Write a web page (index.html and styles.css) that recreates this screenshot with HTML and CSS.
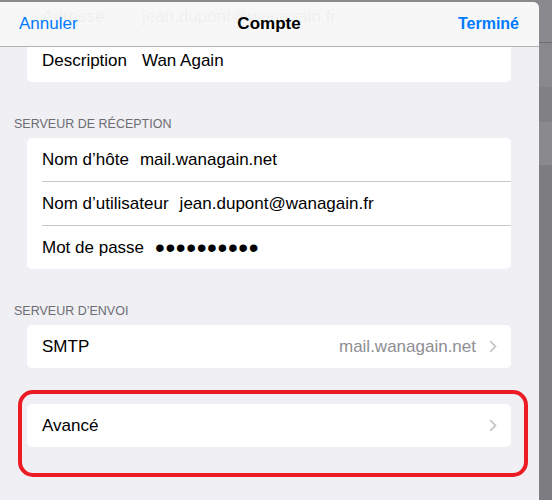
FILE: index.html
```html
<!DOCTYPE html>
<html lang="fr">
<head>
<meta charset="utf-8">
<title>Compte</title>
<link rel="stylesheet" href="styles.css">
</head>
<body>
<div class="screen">
  <div class="sheet">
    <div class="content">
      <div class="card">
        <div class="row"><span class="label fixed">Adresse</span><span class="value">jean.dupont@wanagain.fr</span></div>
        <div class="row"><span class="label fixed">Description</span><span class="value">Wan Again</span></div>
      </div>
      <div class="section-header">Serveur de réception</div>
      <div class="card">
        <div class="row"><span class="label">Nom d’hôte</span><span class="value">mail.wanagain.net</span></div>
        <div class="row"><span class="label">Nom d’utilisateur</span><span class="value">jean.dupont@wanagain.fr</span></div>
        <div class="row"><span class="label">Mot de passe</span><span class="value dots">••••••••••</span></div>
      </div>
      <div class="section-header">Serveur d’envoi</div>
      <div class="card">
        <div class="row"><span class="label">SMTP</span><span class="detail">mail.wanagain.net</span><svg class="chevron" width="8" height="13" viewBox="0 0 8 13"><path d="M1.2 1.2 L6.5 6.5 L1.2 11.8" fill="none" stroke="#c7c7cc" stroke-width="1.8"/></svg></div>
      </div>
      <div class="card spaced">
        <div class="row"><span class="label">Avancé</span><svg class="chevron push" width="8" height="13" viewBox="0 0 8 13"><path d="M1.2 1.2 L6.5 6.5 L1.2 11.8" fill="none" stroke="#c7c7cc" stroke-width="1.8"/></svg></div>
      </div>
    </div>
    <div class="navbar">
      <span class="nav-btn cancel">Annuler</span>
      <span class="nav-title">Compte</span>
      <span class="nav-btn done">Terminé</span>
    </div>
  </div>
  <div class="annotation"></div>
</div>
</body>
</html>
```
FILE: styles.css
```css
html, body {
  margin: 0;
  padding: 0;
}

body {
  font-family: "Liberation Sans", Arial, sans-serif;
  width: 552px;
  height: 500px;
  overflow: hidden;
  background: linear-gradient(to bottom,
    #8a8a8e 0, #8a8a8e 42px,
    #707074 42px, #707074 43px,
    #89898d 43px, #89898d 87px,
    #818185 87px, #818185 122px,
    #8a8a8e 122px, #8a8a8e 165px,
    #7c7c81 165px);
}

.screen {
  position: relative;
  width: 552px;
  height: 500px;
}

.sheet {
  position: relative;
  width: 539px;
  height: 498px;
  margin-top: 2px;
  background: #efeff4;
  border-top-right-radius: 6px;
  overflow: hidden;
}

.navbar {
  position: absolute;
  top: 0;
  left: 0;
  right: 0;
  height: 44px;
  border-bottom: 1px solid #b2b2b2;
  background: rgba(247, 247, 247, 0.97);
  display: grid;
  grid-template-columns: 1fr auto 1fr;
  align-items: center;
  padding: 0 20px 0 19px;
}

.nav-btn {
  color: #007aff;
  font-size: 17px;
}

.done {
  justify-self: end;
  font-size: 16px;
  font-weight: bold;
}

.nav-title {
  font-size: 17px;
  font-weight: bold;
  color: #000;
}

.content {
  margin-top: -7px;
  padding: 0 28px 0 27px;
}

.card {
  background: #fff;
  border-radius: 5px;
}

.card.spaced {
  margin-top: 36px;
}

.row {
  display: flex;
  align-items: center;
  height: 43px;
  margin-left: 15px;
  padding-right: 14px;
  font-size: 17px;
  color: #000;
}

.row + .row {
  border-top: 1px solid #c8c7cc;
}

.label {
  margin-right: 11px;
}

.label.fixed {
  min-width: 89px;
  margin-right: 11px;
}

.dots {
  font-size: 28px;
  line-height: 17px;
  letter-spacing: 0.6px;
}

.detail {
  margin-left: auto;
  margin-right: 13px;
  color: #8e8e93;
}

.chevron {
  display: block;
  flex: none;
}

.chevron.push {
  margin-left: auto;
}

.section-header {
  padding: 35px 0 7px 14px;
  margin-left: -27px;
  font-size: 12.5px;
  line-height: 14px;
  color: #6d6d72;
  text-transform: uppercase;
}

.annotation {
  position: absolute;
  left: 18px;
  top: 388px;
  width: 502px;
  height: 79px;
  border: 4px solid #ed1c24;
  border-radius: 15px;
}
```
